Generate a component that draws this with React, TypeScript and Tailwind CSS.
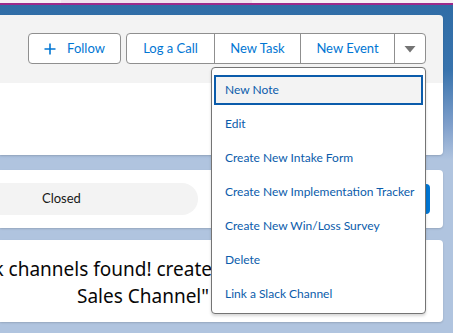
import React from "react";

const menuItems = [
  "New Note",
  "Edit",
  "Create New Intake Form",
  "Create New Implementation Tracker",
  "Create New Win/Loss Survey",
  "Delete",
  "Link a Slack Channel",
];

export default function App() {
  return (
    <div
      className="relative w-[453px] h-[333px] overflow-hidden bg-[linear-gradient(180deg,#2f6ca6_0px,#3873ad_70px,#7f9fcb_125px,#b0c4df_160px,#b0c4df_333px)]"
      style={{ fontFamily: "Lato, 'Noto Sans', sans-serif" }}
    >
      {/* top strips */}
      <div className="flex h-[3px] bg-[#f7f0f5]">
        <div className="w-[61px]" />
        <div className="w-[191px] bg-[#f2e1ee]" />
      </div>
      <div className="h-[2px] bg-[#9c2a8b]" />
      <div className="h-[10px]" />

      <div className="flex flex-col pr-[10px]">
        {/* header card */}
        <div className="flex flex-col rounded-tr-[4px] rounded-br-[4px] shadow-[0_1px_2px_rgba(0,0,0,0.15)] overflow-hidden">
          <div className="h-[68px] bg-[#f3f3f3] flex justify-end items-start pt-[18px] pr-[17px]">
            <button className="h-[31px] w-[93px] flex items-center justify-center gap-[10px] border border-[#8f8f8f] rounded-[4px] bg-white text-[#0176d3] text-[13px]">
              <svg width="12" height="12" viewBox="0 0 12 12" className="mr-[1px]">
                <path d="M6 0.5v11M0.5 6h11" stroke="#0176d3" strokeWidth="1.6" />
              </svg>
              <span>Follow</span>
            </button>
            <div className="ml-[5px] h-[31px] flex border border-[#8f8f8f] rounded-[4px] bg-white text-[#0176d3] text-[13px]">
              <div className="w-[88px] flex items-center justify-center border-r border-[#8f8f8f]">Log a Call</div>
              <div className="w-[86px] flex items-center justify-center border-r border-[#8f8f8f]">New Task</div>
              <div className="w-[94px] flex items-center justify-center border-r border-[#8f8f8f]">New Event</div>
              <div className="w-[30px] flex items-center justify-center">
                <svg width="12" height="8" viewBox="0 0 12 8">
                  <path d="M0.5 1h11L6 7.5z" fill="#747474" />
                </svg>
              </div>
            </div>
          </div>
          <div className="h-[72px] bg-white" />
        </div>

        <div className="h-[15px]" />

        {/* status card */}
        <div className="h-[58px] bg-white rounded-r-[4px] shadow-[0_1px_2px_rgba(0,0,0,0.15)] flex items-center pr-[13px]">
          <div className="w-[198px] h-[32px] rounded-r-[16px] bg-[#f3f3f3] flex items-center pl-[42px] text-[13px] text-[#181818]">
            Closed
          </div>
          <div className="flex-1" />
          <div className="w-[30px] h-[30px] rounded-[4px] bg-[#0176d3]" />
        </div>

        <div className="h-[12px]" />

        {/* slack card */}
        <div
          className="h-[82px] bg-white rounded-r-[4px] shadow-[0_1px_2px_rgba(0,0,0,0.15)] overflow-hidden pt-[16px] text-[19px] text-[#080707] leading-[27px]"
          style={{ fontFamily: "'Noto Sans', sans-serif" }}
        >
          <div className="w-[212px] flex justify-end whitespace-nowrap">
            <span>k channels found! create</span>
          </div>
          <div className="w-[209px] flex justify-end whitespace-nowrap">
            <span>Sales Channel"</span>
          </div>
        </div>
      </div>

      {/* dropdown menu */}
      <div className="absolute left-[211px] top-[67px] w-[215px] h-[247px] bg-white border border-[#747474] rounded-[4px] shadow-[0_2px_3px_rgba(0,0,0,0.16)] pt-[5px] px-[1px]">
        {menuItems.map((item, i) => (
          <div key={item} className="h-[34px] px-[1px] py-[2px]">
            <div
              className={
                i === 0
                  ? "h-[30px] flex items-center pl-[9px] border-2 border-[#0b5cab] bg-[#f3f3f3] text-[12px] text-[#0b5cab] whitespace-nowrap"
                  : "h-[30px] flex items-center pl-[9px] border-2 border-transparent text-[12px] text-[#0b5cab] whitespace-nowrap"
              }
            >
              {item}
            </div>
          </div>
        ))}
      </div>
    </div>
  );
}
